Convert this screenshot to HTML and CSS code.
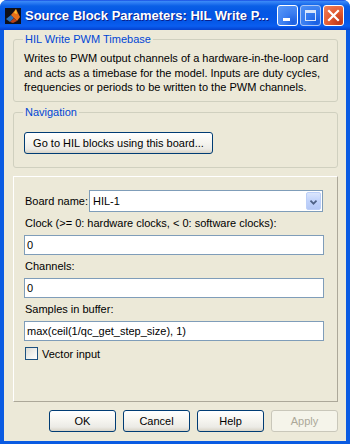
FILE: index.html
```html
<!DOCTYPE html>
<html>
<head>
<meta charset="utf-8">
<link rel="stylesheet" href="styles.css">
</head>
<body>
<div class="window">
  <div class="titlebar">
    <svg class="app-icon" width="16" height="16" viewBox="0 0 16 16">
      <rect x="0" y="0" width="16" height="16" fill="#101018"/>
      <polygon points="1,11 6,7 9,10 5,14" fill="#2a6fb8"/>
      <polygon points="6,7 11,1 15,9 12,13 9,10" fill="#e8701a"/>
      <polygon points="9,5 11,1 12,6" fill="#f7c030"/>
      <polygon points="9,10 12,13 8,15 5,14" fill="#b8401a"/>
    </svg>
    <span class="title">Source Block Parameters: HIL Write P...</span>
    <div class="caption-btns">
      <span class="cbtn blue"><svg width="19" height="19" viewBox="0 0 19 19"><rect x="5" y="12" width="7" height="3" fill="#fff"/></svg></span>
      <span class="cbtn blue dim"><svg width="19" height="19" viewBox="0 0 19 19"><rect x="4.5" y="4.5" width="10" height="10" fill="none" stroke="#fff" stroke-width="1"/><rect x="4" y="4" width="11" height="3" fill="#fff"/></svg></span>
      <span class="cbtn close"><svg width="19" height="19" viewBox="0 0 19 19"><path d="M5 5 L14 14 M14 5 L5 14" stroke="#fff" stroke-width="2.2" stroke-linecap="square"/></svg></span>
    </div>
  </div>
  <div class="client">
    <fieldset class="group desc">
      <legend>HIL Write PWM Timebase</legend>
      <p class="desc-text">Writes to PWM output channels of a hardware-in-the-loop card<br>and acts as a timebase for the model. Inputs are duty cycles,<br>frequencies or periods to be written to the PWM channels.</p>
    </fieldset>
    <fieldset class="group nav">
      <legend>Navigation</legend>
      <button class="btn goto">Go to HIL blocks using this board...</button>
    </fieldset>
    <div class="params">
      <div class="row">
        <span class="row-label">Board name:</span>
        <div class="select"><span>HIL-1</span><span class="drop"><svg width="15" height="18" viewBox="0 0 15 18"><path d="M4 7.5 L7.5 11 L11 7.5" fill="none" stroke="#4d6185" stroke-width="2"/></svg></span></div>
      </div>
      <div class="lbl">Clock (&gt;= 0: hardware clocks, &lt; 0: software clocks):</div>
      <div class="input">0</div>
      <div class="lbl">Channels:</div>
      <div class="input">0</div>
      <div class="lbl">Samples in buffer:</div>
      <div class="input">max(ceil(1/qc_get_step_size), 1)</div>
      <div class="check"><span class="box"></span><span>Vector input</span></div>
    </div>
    <div class="buttons">
      <button class="btn">OK</button>
      <button class="btn">Cancel</button>
      <button class="btn">Help</button>
      <button class="btn disabled">Apply</button>
    </div>
  </div>
</div>
</body>
</html>
```
FILE: styles.css
```css
html, body {
  margin: 0;
  padding: 0;
  background: #ffffff;
}
body {
  font-family: "Liberation Sans", Arial, sans-serif;
  font-size: 11px;
  color: #000;
}
.window {
  width: 350px;
  height: 444px;
  display: flex;
  flex-direction: column;
  background: #0a5be2;
  border-radius: 7px 7px 0 0;
  overflow: hidden;
}
.titlebar {
  height: 30px;
  flex: none;
  display: flex;
  align-items: center;
  padding-left: 5px;
  background: linear-gradient(#0831d9 0px, #3c8cf8 1px, #2a7af2 3px, #0a5fe6 6px, #0457e4 12px, #0558e8 22px, #0a5ef0 26px, #0548d8 29px, #0840c8 30px);
  box-sizing: border-box;
}
.app-icon {
  flex: none;
  margin-top: 1px;
}
.title {
  margin-left: 4px;
  color: #fff;
  font-family: "Liberation Sans", Arial, sans-serif;
  font-weight: bold;
  font-size: 13px;
  text-shadow: 1px 1px 0 #0a1f8a;
  white-space: nowrap;
  overflow: hidden;
  flex: 0 1 auto;
  min-width: 0;
}
.caption-btns {
  margin-left: auto;
  margin-right: 6px;
  display: flex;
  flex: none;
  gap: 2px;
  margin-top: 1px;
}
.cbtn {
  width: 21px;
  height: 21px;
  box-sizing: border-box;
  border: 1px solid #fff;
  border-radius: 3px;
  display: flex;
}
.cbtn.blue {
  background: radial-gradient(circle at 80% 85%, #1c5fe0 0%, #3b7df0 40%, #5b9af8 100%);
}
.cbtn.dim {
  border-color: #c8d8f8;
  opacity: 0.85;
}
.cbtn.close {
  background: radial-gradient(circle at 80% 85%, #c0381a 0%, #e2582e 45%, #ee8460 100%);
}
.client {
  flex: 1;
  background: #ece9d8;
  margin: 0 4px 3px 4px;
  display: flex;
  flex-direction: column;
}
.group {
  margin: 0 8px 0 9px;
  border: 1px solid #d0d0bf;
  border-radius: 3px;
  padding: 0 10px;
  min-width: 0;
}
.group legend {
  color: #0046d5;
  padding: 0 2px;
  margin-left: -1px;
  line-height: 13px;
}
.desc {
  margin-top: 3px;
  padding-bottom: 6px;
}
.desc-text {
  margin: 5px 0 0 0;
  line-height: 14.5px;
  white-space: nowrap;
}
.nav {
  margin-top: 4px;
  padding-bottom: 13px;
}
.btn {
  font-family: "Liberation Sans", Arial, sans-serif;
  font-size: 11px;
  color: #000;
  height: 22px;
  box-sizing: border-box;
  border: 1px solid #003c74;
  border-radius: 3px;
  background: linear-gradient(#ffffff 0%, #f6f5f0 45%, #ecebe6 80%, #d8d3c6 100%);
  padding: 0;
}
.goto {
  margin-top: 13px;
  width: 189px;
  display: block;
}
.params {
  margin: 8px 8px 0 9px;
  height: 226px;
  box-sizing: border-box;
  border: 1px solid #aca899;
  border-top-color: #ffffff;
  border-left-color: #ffffff;
  padding: 13px 14px 0 11px;
}
.row {
  display: flex;
  align-items: center;
  height: 22px;
  margin-bottom: 1px;
}
.row-label {
  width: 64px;
  flex: none;
}
.select {
  flex: 1;
  height: 22px;
  box-sizing: border-box;
  border: 1px solid #7f9db9;
  background: #fff;
  display: flex;
  align-items: center;
  padding-left: 3px;
}
.select span:first-child {
  flex: 1;
}
.drop {
  width: 15px;
  height: 18px;
  margin-right: 1px;
  box-sizing: border-box;
  background: linear-gradient(#dbe6fd 0%, #c1d3fb 50%, #b4c8f6 100%);
  border: 1px solid #bccff8;
  border-radius: 2px;
  display: flex;
}
.lbl {
  line-height: 14px;
  margin: 4px 0 5px 0;
  white-space: nowrap;
}
.input {
  height: 20px;
  box-sizing: border-box;
  border: 1px solid #7f9db9;
  background: #fff;
  line-height: 18px;
  padding-left: 2px;
  width: 300px;
  margin-left: -1px;
  white-space: nowrap;
  overflow: hidden;
}
.check {
  margin-top: 6px;
  display: flex;
  align-items: center;
  gap: 4px;
  line-height: 14px;
}
.box {
  width: 13px;
  height: 13px;
  box-sizing: border-box;
  border: 1px solid #1c5180;
  background: linear-gradient(135deg, #dcdcd6 0%, #f2f2ee 60%, #ffffff 100%);
}
.buttons {
  margin-top: 8px;
  display: flex;
  justify-content: flex-end;
  gap: 7px;
  padding-right: 8px;
}
.buttons .btn {
  width: 67px;
}
.btn.disabled {
  color: #aca899;
  border-color: #c9c7ba;
  background: #f5f4ea;
}
```
